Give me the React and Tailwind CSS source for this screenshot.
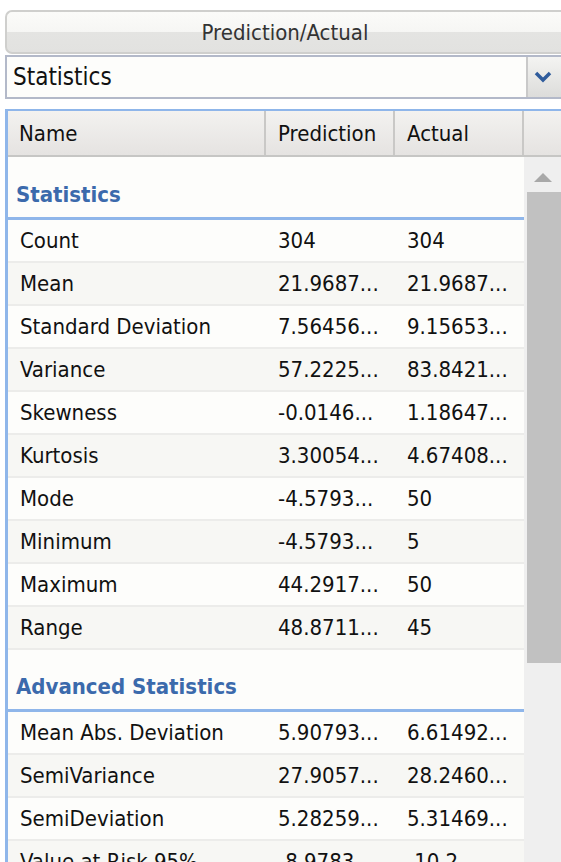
import React from "react";

const stats = [
  ["Count", "304", "304"],
  ["Mean", "21.9687...", "21.9687..."],
  ["Standard Deviation", "7.56456...", "9.15653..."],
  ["Variance", "57.2225...", "83.8421..."],
  ["Skewness", "-0.0146...", "1.18647..."],
  ["Kurtosis", "3.30054...", "4.67408..."],
  ["Mode", "-4.5793...", "50"],
  ["Minimum", "-4.5793...", "5"],
  ["Maximum", "44.2917...", "50"],
  ["Range", "48.8711...", "45"],
];

const advanced = [
  ["Mean Abs. Deviation", "5.90793...", "6.61492..."],
  ["SemiVariance", "27.9057...", "28.2460..."],
  ["SemiDeviation", "5.28259...", "5.31469..."],
  ["Value at Risk 95%", "-8.9783...", "-10.2..."],
];

const Row = ({ row, index }) => (
  <div
    className={`flex h-[43px] items-center border-b-2 border-[#ececea] text-[22px] text-[#111] ${
      index % 2 === 1 ? "bg-[#f7f7f4]" : "bg-[#fdfdfb]"
    }`}
  >
    <div className="w-[258px] shrink-0 pl-[12px] whitespace-nowrap">{row[0]}</div>
    <div className="w-[129px] shrink-0 pl-[12px] whitespace-nowrap">{row[1]}</div>
    <div className="w-[129px] shrink-0 pl-[12px] whitespace-nowrap">{row[2]}</div>
  </div>
);

const SectionHeader = ({ title, height }) => (
  <div className={`flex items-end ${height} border-b-[3px] border-[#8fb6ea] bg-[#fdfdfb] pb-[6px] pl-[8px]`}>
    <span className="text-[22px] font-bold text-[#3b6aac]">{title}</span>
  </div>
);

export default function App() {
  return (
    <div
      className="relative h-[862px] w-[561px] overflow-hidden bg-white"
      style={{ fontFamily: "Tahoma, 'DejaVu Sans Condensed', 'Noto Sans', sans-serif" }}
    >
      <div className="pt-[10px] pl-[5px]">
        <div className="flex h-[44px] w-[558px] items-center justify-center rounded-l-[7px] border-2 border-r-0 border-[#cfcfcd] bg-[linear-gradient(to_bottom,#fbfbf9_0%,#f6f6f4_50%,#e4e4e2_51%,#e2e2e0_100%)] text-[22px] text-[#333]">
          Prediction/Actual
        </div>

        <div className="mt-[1px] flex h-[44px] w-[560px] border-2 border-r-0 border-[#b3b9c9]">
          <div className="flex w-[519px] items-center bg-[#fdfdfb] pl-[6px] text-[24px] text-[#111]">
            Statistics
          </div>
          <div className="flex flex-1 items-center border-l-2 border-[#c9c9c9] bg-[linear-gradient(to_bottom,#f4f4f2,#dcdcda)] pl-[6px]">
            <svg width="18" height="12" viewBox="0 0 18 12">
              <path d="M2 2 L9 9 L16 2" fill="none" stroke="#2f5c9c" strokeWidth="3.5" />
            </svg>
          </div>
        </div>

        <div className="mt-[10px] w-[560px] border-t-2 border-l-[3px] border-[#8fb6ea]">
          <div className="flex h-[46px] border-b-2 border-[#c6c6c4] bg-[linear-gradient(to_bottom,#f3f2f0,#e5e3e1)] text-[22px] text-[#111]">
            <div className="flex w-[258px] shrink-0 items-center border-r-2 border-[#c9c8c6] pl-[11px]">Name</div>
            <div className="flex w-[129px] shrink-0 items-center border-r-2 border-[#c9c8c6] pl-[12px]">Prediction</div>
            <div className="flex w-[129px] shrink-0 items-center border-r-2 border-[#c9c8c6] pl-[12px]">Actual</div>
            <div className="flex-1" />
          </div>

          <div className="flex">
            <div className="w-[516px] shrink-0">
              <SectionHeader title="Statistics" height="h-[63px]" />
              {stats.map((row, i) => (
                <Row key={row[0]} row={row} index={i} />
              ))}
              <SectionHeader title="Advanced Statistics" height="h-[62px]" />
              {advanced.map((row, i) => (
                <Row key={row[0]} row={row} index={i} />
              ))}
            </div>
            <div className="flex-1 bg-[#efefef]">
              <div className="flex h-[35px] items-end justify-center pb-[10px] pr-[4px]">
                <svg width="18" height="10" viewBox="0 0 18 10">
                  <path d="M0 10 L9 1 L18 10 Z" fill="#a8a8a8" />
                </svg>
              </div>
              <div className="ml-[3px] h-[471px] bg-[#c1c1c1]" />
            </div>
          </div>
        </div>
      </div>
    </div>
  );
}
